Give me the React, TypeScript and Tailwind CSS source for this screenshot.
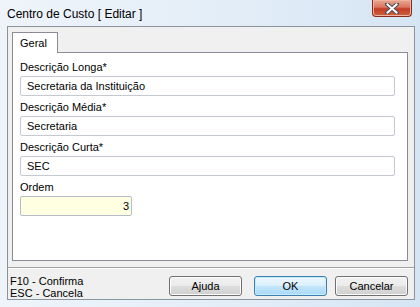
import React from 'react';

const font = { fontFamily: '"Liberation Sans", Arial, sans-serif' };

function Field({ label, value, narrow }: { label: string; value: string; narrow?: boolean }) {
  return (
    <div className="flex flex-col">
      <div className="h-[13px] text-[11px] leading-[13px] text-black">{label}</div>
      {narrow ? (
        <div className="mt-[2px] flex h-[20px] w-[112px] items-center justify-end rounded-[2px] border border-[#b5bcc7] bg-[#ffffe1] pr-[2px] text-[11px] text-black">
          {value}
        </div>
      ) : (
        <div className="mt-[2px] flex h-[20px] w-[375px] items-center rounded-[2px] border border-[#c5cad2] bg-white pl-[6px] text-[11px] text-black">
          {value}
        </div>
      )}
    </div>
  );
}

function Button({ label, primary }: { label: string; primary?: boolean }) {
  return (
    <div
      className={
        primary
          ? 'flex h-[20px] w-[73px] items-center justify-center rounded-[3px] border border-[#3c7fb1] bg-[linear-gradient(to_bottom,#edf7fd_0%,#dcf0fc_48%,#c2e5fb_52%,#a9d9f8_100%)] text-[11px] text-black shadow-[inset_0_0_0_1px_#c9ebfd]'
          : 'flex h-[20px] w-[73px] items-center justify-center rounded-[3px] border border-[#707070] bg-[linear-gradient(to_bottom,#f2f2f2_0%,#ebebeb_48%,#dddddd_52%,#cfcfcf_100%)] text-[11px] text-black shadow-[inset_0_0_0_1px_#fcfcfc]'
      }
    >
      {label}
    </div>
  );
}

export default function App() {
  return (
    <div
      className="flex h-[307px] w-[420px] flex-col bg-[linear-gradient(to_right,#eef4fa_0%,#e4eef8_50%,#d6e5f4_100%)]"
      style={font}
    >
      <div className="flex h-[26px] items-start justify-between pl-[7px] pr-[8px]">
        <div className="pt-[7px] text-[12px] leading-[14px] text-black">Centro de Custo [ Editar ]</div>
        <div className="flex h-[17px] w-[40px] items-center justify-center rounded-b-[4px] border border-t-0 border-[#8a2a1c] bg-[linear-gradient(to_bottom,#e9a895_0%,#d9755d_45%,#c23d24_55%,#d0613f_100%)] shadow-[inset_0_0_0_1px_#eeb3a3]">
          <svg width="14" height="11" viewBox="0 0 14 11">
            <path d="M2 1 L12 10 M12 1 L2 10" stroke="#4a4f5a" strokeWidth="4" strokeLinecap="square" />
            <path d="M2.5 1.5 L11.5 9.5 M11.5 1.5 L2.5 9.5" stroke="#ffffff" strokeWidth="2" strokeLinecap="square" />
          </svg>
        </div>
      </div>

      <div className="mb-[7px] ml-[7px] mr-[5px] flex flex-1 flex-col border border-[#8b939d] bg-[#f0f0f0]">
        <div className="pl-[4px] pr-[6px] pt-[5px]">
          <div className="relative z-10 -mb-px flex h-[21px] w-[46px] items-center border border-b-0 border-[#898c95] bg-white pl-[7px] text-[11px] text-black">
            Geral
          </div>
          <div className="flex h-[209px] flex-col gap-[5px] border border-[#898c95] bg-white pl-[7px] pt-[8px]">
            <Field label="Descrição Longa*" value="Secretaria da Instituição" />
            <Field label="Descrição Média*" value="Secretaria" />
            <Field label="Descrição Curta*" value="SEC" />
            <Field label="Ordem" value="3" narrow />
          </div>
        </div>

        <div className="mt-[6px] h-px bg-[#a0a0a0]" />
        <div className="h-px bg-white" />

        <div className="flex flex-1 items-start justify-between pl-[2px] pr-[6px]">
          <div className="pt-[6px] text-[11px] leading-[12px] text-black">
            <div>F10 - Confirma</div>
            <div>ESC - Cancela</div>
          </div>
          <div className="flex pt-[7px]">
            <Button label="Ajuda" />
            <div className="w-[12px]" />
            <Button label="OK" primary />
            <div className="w-[8px]" />
            <Button label="Cancelar" />
          </div>
        </div>
      </div>
    </div>
  );
}
